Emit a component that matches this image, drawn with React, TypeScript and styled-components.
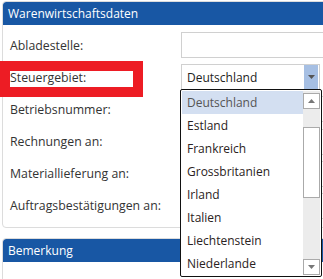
import React from "react";
import styled, { createGlobalStyle } from "styled-components";

const Global = createGlobalStyle`
  html, body { margin: 0; padding: 0; background: #fff; overflow: hidden; }
  body { font-family: "Open Sans", "Noto Sans", sans-serif; width: 323px; height: 279px; position: relative; }
`;

const Page = styled.div`
  display: flex;
  flex-direction: column;
  gap: 10px;
  padding: 1px 0 0 2px;
  height: 279px;
  box-sizing: border-box;
  overflow: hidden;
`;

const Panel = styled.section`
  width: 330px;
  flex-shrink: 0;
  border: 1px solid #dcdcdc;
  border-radius: 4px;
  box-sizing: border-box;
  overflow: hidden;
`;

const Header = styled.div`
  height: 23px;
  background: #1857a4;
  color: #fff;
  font-size: 12px;
  line-height: 23px;
  padding-left: 5px;
  border-radius: 3px 3px 0 0;
`;

const Form = styled.div`
  display: grid;
  grid-template-columns: 171px 142px;
  grid-auto-rows: 26px;
  row-gap: 6.2px;
  padding: 7px 0 8px 7px;
  align-items: center;
`;

const Label = styled.div`
  font-size: 12.3px;
  color: #333;
`;

const Input = styled.div`
  height: 26px;
  box-sizing: border-box;
  border: 1px solid #d0d0d0;
  width: 150px;
`;

const Select = styled.div`
  height: 26px;
  box-sizing: border-box;
  border: 1px solid #d0d0d0;
  width: 139px;
  display: flex;
  align-items: center;
  font-size: 12px;
  color: #222;
  padding-left: 5px;
  justify-content: space-between;
`;

const SelectArrow = styled.div`
  width: 14px;
  height: 24px;
  background: #a6bfe3;
  margin-right: 1px;
  display: flex;
  align-items: center;
  justify-content: center;
`;

const Highlight = styled.div`
  position: absolute;
  left: 0;
  top: 61px;
  width: 143px;
  height: 36px;
  box-sizing: border-box;
  border: 10px solid #ed1c24;
  pointer-events: none;
`;

const List = styled.div`
  position: absolute;
  left: 180px;
  top: 89px;
  width: 142px;
  height: 188px;
  box-sizing: border-box;
  border: 1px solid #111;
  border-radius: 2px;
  background: #fff;
  display: flex;
  padding: 1px;
`;

const Items = styled.div`
  flex: 1;
  display: flex;
  flex-direction: column;
`;

const Item = styled.div<{ $active?: boolean }>`
  height: 23px;
  line-height: 23px;
  padding-left: 5px;
  font-size: 12px;
  color: ${(p) => (p.$active ? "#555" : "#2a2222")};
  background: ${(p) => (p.$active ? "#d3dff1" : "transparent")};
`;

const Scrollbar = styled.div`
  width: 17px;
  background: #ececec;
  display: flex;
  flex-direction: column;
  align-items: center;
  padding-top: 2px;
  box-sizing: border-box;
`;

const ScrollButton = styled.div`
  width: 17px;
  height: 16px;
  box-sizing: border-box;
  border: 1px solid #aaa;
  background: #fff;
  display: flex;
  align-items: center;
  justify-content: center;
`;

const Thumb = styled.div`
  width: 17px;
  height: 71px;
  box-sizing: border-box;
  border: 1px solid #aaa;
  background: #fff;
  margin-top: 18px;
`;

const Spacer = styled.div`
  flex: 1;
`;

const Filler = styled.div`
  height: 40px;
`;

const Tri = ({ up, color = "#777" }: { up?: boolean; color?: string }) => (
  <svg width="7" height="4" viewBox="0 0 7 4">
    {up ? <polygon points="0,4 7,4 3.5,0" fill={color} /> : <polygon points="0,0 7,0 3.5,4" fill={color} />}
  </svg>
);

const countries = [
  "Deutschland",
  "Estland",
  "Frankreich",
  "Grossbritanien",
  "Irland",
  "Italien",
  "Liechtenstein",
  "Niederlande",
];

const labels = [
  "Abladestelle:",
  "Steuergebiet:",
  "Betriebsnummer:",
  "Rechnungen an:",
  "Materiallieferung an:",
  "Auftragsbestätigungen an:",
];

export default function App() {
  return (
    <>
      <Global />
      <Page>
        <Panel>
          <Header>Warenwirtschaftsdaten</Header>
          <Form>
            {labels.map((l, i) => (
              <React.Fragment key={l}>
                <Label>{l}</Label>
                {i === 1 ? (
                  <Select>
                    Deutschland
                    <SelectArrow>
                      <Tri color="#555" />
                    </SelectArrow>
                  </Select>
                ) : (
                  <Input />
                )}
              </React.Fragment>
            ))}
          </Form>
        </Panel>
        <Panel>
          <Header>Bemerkung</Header>
          <Filler />
        </Panel>
      </Page>
      <Highlight />
      <List>
        <Items>
          {countries.map((c, i) => (
            <Item key={c} $active={i === 0}>
              {c}
            </Item>
          ))}
        </Items>
        <Scrollbar>
          <ScrollButton>
            <Tri up />
          </ScrollButton>
          <Thumb />
          <Spacer />
          <ScrollButton>
            <Tri />
          </ScrollButton>
        </Scrollbar>
      </List>
    </>
  );
}
